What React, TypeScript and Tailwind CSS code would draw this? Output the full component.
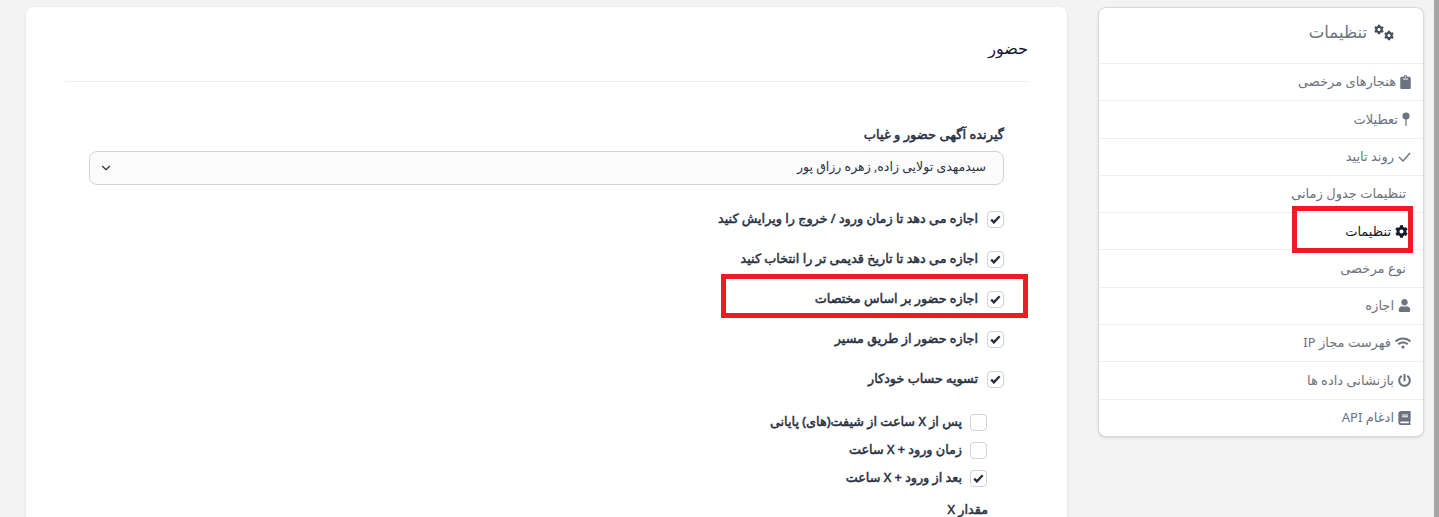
import React from "react";
import { FaBook, FaCog, FaClipboard, FaPowerOff, FaUser, FaWifi } from "react-icons/fa";
import { ChevronDown } from "lucide-react";

const PinIcon = () => (
  <svg viewBox="0 0 8 14" className="mr-[1px] h-[14px] w-2 fill-current">
    <circle cx="4" cy="4" r="3.6" />
    <rect x="3.4" y="7" width="1.2" height="7" />
  </svg>
);

const ThinCheck = () => (
  <svg viewBox="0 0 13 10" className="h-[10px] w-[13px] fill-none stroke-current stroke-[1.4]">
    <path d="M1 5l4 4 7-8" />
  </svg>
);

const menu = [
  { label: "هنجارهای مرخصی", icon: <FaClipboard className="h-[14px] w-[11px]" /> },
  { label: "تعطیلات", icon: <PinIcon /> },
  { label: "روند تایید", icon: <ThinCheck /> },
  { label: "تنظیمات جدول زمانی", pad: "pr-[17px]" },
  { label: "تنظیمات", icon: <FaCog className="size-[13px]" />, active: true, pad: "pr-[15px]" },
  { label: "نوع مرخصی", pad: "pr-[17px]" },
  { label: "اجازه", icon: <FaUser className="size-[13px]" /> },
  { label: "فهرست مجاز IP", icon: <FaWifi className="size-[16px]" /> },
  { label: "بازنشانی داده ها", icon: <FaPowerOff className="size-[13px]" /> },
  { label: "ادغام API", icon: <FaBook className="h-[14px] w-[13px]" /> },
];

const mainChecks = [
  "اجازه می دهد تا زمان ورود / خروج را ویرایش کنید",
  "اجازه می دهد تا تاریخ قدیمی تر را انتخاب کنید",
  "اجازه حضور بر اساس مختصات",
  "اجازه حضور از طریق مسیر",
  "تسویه حساب خودکار",
];

const subChecks = [
  { label: "پس از X ساعت از شیفت(های) پایانی", checked: false },
  { label: "زمان ورود + X ساعت", checked: false },
  { label: "بعد از ورود + X ساعت", checked: true },
];

function Check({ checked }: { checked: boolean }) {
  return (
    <span className="flex size-[17px] shrink-0 items-center justify-center rounded-[4px] border border-[#d1d0db] bg-white text-[#28303f]">
      {checked && (
        <svg viewBox="0 0 12 10" className="h-[9px] w-[11px] fill-none stroke-current stroke-[2.6]">
          <path d="M1.2 5.2l3 3 6.4-6.8" />
        </svg>
      )}
    </span>
  );
}

export default function App() {
  return (
    <div
      dir="rtl"
      className="relative flex h-[517px] items-start gap-[31px] overflow-hidden bg-[#f3f3f4] pt-[7px] pr-[15px] pl-[26px] text-[13px] text-[#28303f] [font-family:'Noto_Sans','DejaVu_Sans',sans-serif]"
    >
      <div className="absolute top-0 right-0 h-full w-[5px] bg-[#a6a6a6]" />

      <aside className="w-[326px] shrink-0 rounded-lg border border-[#d9d8e0] bg-white shadow-sm">
        <div className="flex h-[55px] items-center gap-[7px] pr-[29px] pb-[6px] text-[16.5px] text-[#6b7280]">
          <span className="flex h-[17px] w-[20px] items-start justify-between text-[#444b5a]">
            <FaCog className="mt-[6px] size-[11px]" />
            <FaCog className="size-[11px]" />
          </span>
          تنظیمات
        </div>
        {menu.map((item) => (
          <div
            key={item.label}
            className={`flex h-[37.3px] items-center gap-1 border-t border-[#eeeef1] ${item.pad ?? "pr-3"} ${
              item.active ? "text-[#111827]" : "text-[#6b7280]"
            }`}
          >
            {item.icon}
            {item.label}
          </div>
        ))}
      </aside>

      <main className="h-[540px] min-w-0 flex-1 rounded-lg bg-white px-[39px] shadow-sm">
        <h1 className="flex h-[75px] items-center border-b border-[#eeeef1] pt-[8px] text-[16px] text-[#111827]">
          حضور
        </h1>

        <div className="px-[24px] pt-[43px]">
          <label className="text-[13px] [-webkit-text-stroke:0.5px_currentColor]">گیرنده آگهی حضور و غیاب</label>
          <div className="mt-[6px] flex h-[34px] items-center justify-between rounded-lg border border-[#d1d0db] bg-[#fbfbfc] pr-[17px] pl-[9px] text-[12.5px]">
            سیدمهدی تولایی زاده, زهره رزاق پور
            <ChevronDown className="size-[14px]" />
          </div>

          <div className="mt-[26px] flex flex-col gap-[23px]">
            {mainChecks.map((label) => (
              <div key={label} className="flex h-[17px] items-center gap-[9px] text-[12.75px] [-webkit-text-stroke:0.5px_currentColor]">
                <Check checked />
                {label}
              </div>
            ))}
          </div>

          <div className="mt-[26px] flex flex-col gap-[11px] pr-[17px]">
            {subChecks.map((item) => (
              <div key={item.label} className="flex h-[17px] items-center gap-2 text-[12.75px] [-webkit-text-stroke:0.5px_currentColor]">
                <Check checked={item.checked} />
                {item.label}
              </div>
            ))}
          </div>

          <div className="mt-[13px] pr-[16px] text-[12.75px] [-webkit-text-stroke:0.5px_currentColor]">مقدار X</div>
        </div>
      </main>

      <div className="absolute top-[206px] left-[1292px] h-[47px] w-[121px] border-[5px] border-[#ed1c24]" />
      <div className="absolute top-[274px] left-[721px] h-[44px] w-[307px] border-[5px] border-[#ed1c24]" />
    </div>
  );
}
